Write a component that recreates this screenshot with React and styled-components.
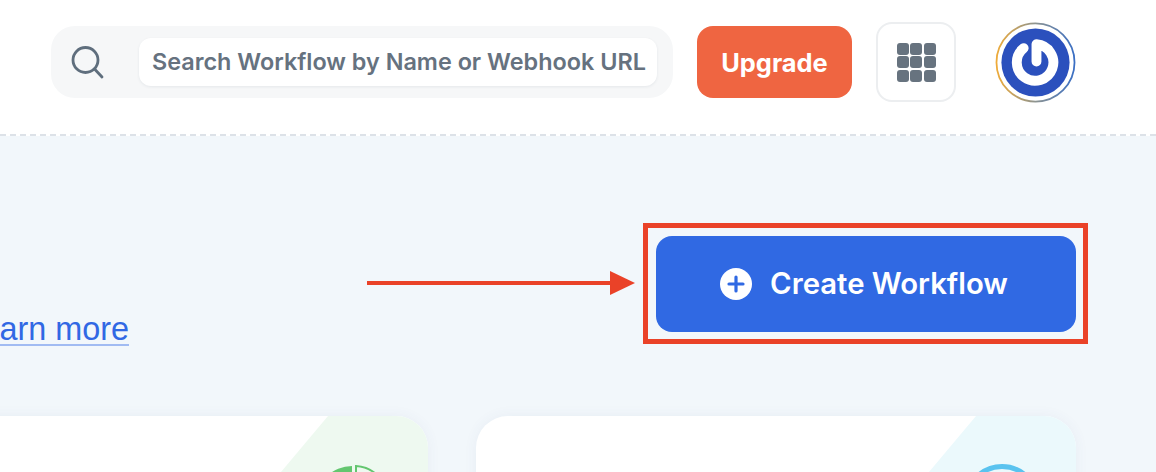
import React from "react";
import styled, { createGlobalStyle } from "styled-components";

const Global = createGlobalStyle`
  html, body { margin: 0; padding: 0; background: #fff; }
  body { font-family: Inter, "Noto Sans", sans-serif; }
`;
const Page = styled.div`
  width: 1156px; height: 472px; overflow: hidden; background: #f2f7fb;
`;
const Header = styled.header`
  height: 134px; box-sizing: border-box; background: #fff;
  display: flex; align-items: flex-start;
  padding: 22px 0 0 51px;
`;
const Dash = styled.div`
  height: 2px; background: repeating-linear-gradient(90deg, #dde2e8 0 6px, transparent 6px 10px), #fff;
`;
const SearchBar = styled.div`
  width: 622px; height: 72px; margin-top: 4px; box-sizing: border-box;
  background: #f6f7f8; border-radius: 24px; display: flex; align-items: center;
  padding: 0 16px 0 18px;
`;
const SearchIcon = styled.svg`
  width: 36px; height: 36px; flex: none; margin-right: 34px;
`;
const SearchField = styled.div`
  flex: 1; height: 48px; background: #fff; border-radius: 12px; display: flex; align-items: center;
  padding: 0 0 2px 13px; box-sizing: border-box; box-shadow: 0 1px 3px rgba(30,50,80,.08);
  font-size: 23.4px; font-weight: 600; color: #66727f; white-space: nowrap;
`;
const Upgrade = styled.button`
  width: 155px; height: 72px; margin: 4px 0 0 24px; border: 0; border-radius: 16px;
  background: #ef6541; color: #fff; font: 700 25.4px Inter, sans-serif; padding: 0;
`;
const Apps = styled.div`
  width: 80px; height: 80px; margin-left: 24px; box-sizing: border-box; border: 2px solid #eceef0;
  border-radius: 16px; background: #fff; display: grid; grid-template: repeat(3, 12px) / repeat(3, 12px);
  gap: 1.5px; place-content: center;
`;
const Dot = styled.span`
  background: #67737f; border-radius: 3px;
`;
const Avatar = styled.svg`
  width: 81px; height: 81px; margin: -0.5px 0 0 39px; flex: none;
`;
const Hero = styled.section`
  height: 96px; margin-top: 100px; display: flex; justify-content: space-between; padding-right: 80px;
`;
const LearnSlot = styled.div`
  width: 129px; display: flex; justify-content: flex-end; align-items: flex-end;
`;
const Learn = styled.a`
  font: 400 32.4px/34px "Liberation Sans", Arial, sans-serif; margin-bottom: -14px; color: #3168e4; white-space: nowrap; flex: none;
  text-decoration: underline; text-decoration-color: #a1bbf2; text-decoration-thickness: 2px; text-underline-offset: 4px;
`;
const CreateWrap = styled.div`
  position: relative; width: 420px; height: 96px;
`;
const Create = styled.button`
  width: 100%; height: 100%; border: 0; border-radius: 16px; background: #3069e3; color: #fff;
  display: flex; align-items: center; justify-content: center; gap: 18px; padding: 0 4px 2px 0;
  font: 600 29.3px Inter, sans-serif;
`;
const PlusIcon = styled.svg`
  width: 32px; height: 32px; flex: none; margin-top: 2px;
`;
const Frame = styled.div`
  position: absolute; inset: -13px -12px -12px -13px; border: 5px solid #ea4228; pointer-events: none;
`;
const Arrow = styled.svg`
  position: absolute; left: -289px; top: 34px; width: 268px; height: 26px;
`;
const Cards = styled.section`
  display: flex; gap: 48px; margin: 84px 0 0 -172px;
`;
const Card = styled.article`
  position: relative; width: 600px; height: 200px; flex: none; background: #fff; border-radius: 32px;
  overflow: hidden; box-shadow: 0 0 14px rgba(60,90,140,.06);
  &::before {
    content: ""; position: absolute; right: 0; top: 0; width: 200px; height: 112px;
    background: ${(p) => p.$tint};
    clip-path: polygon(100px 0, 200px 0, 200px 112px, 6px 112px);
  }
`;
const CardGlyph = styled.svg`
  position: absolute; top: 48px; right: 36px; width: 76px; height: 76px;
`;

export default function App() {
  return (
    <Page>
      <Global />
      <Header>
        <SearchBar>
          <SearchIcon viewBox="0 0 36 36" fill="none" stroke="#5f6e7d" strokeWidth="2.8" strokeLinecap="round">
            <circle cx="16.5" cy="16" r="12.5" />
            <path d="M26 25.5l7 7.5" />
          </SearchIcon>
          <SearchField>Search Workflow by Name or Webhook URL</SearchField>
        </SearchBar>
        <Upgrade>Upgrade</Upgrade>
        <Apps>{Array.from({ length: 9 }, (_, i) => <Dot key={i} />)}</Apps>
        <Avatar viewBox="0 0 82 82" fill="none">
          <defs>
            <linearGradient id="ring" x1="0" y1="0" x2="1" y2="0">
              <stop offset="0" stopColor="#eeab3a" />
              <stop offset=".5" stopColor="#8d9491" />
              <stop offset="1" stopColor="#3b6fc4" />
            </linearGradient>
          </defs>
          <circle cx="41" cy="41" r="39.5" stroke="url(#ring)" strokeWidth="1.8" fill="#fff" />
          <circle cx="41" cy="41" r="34.5" fill="#2b50bd" />
          <path d="M29 26.5A18.5 18.5 0 1 0 42 22.5V40" stroke="#fff" strokeWidth="10" strokeLinecap="round" strokeLinejoin="round" />
        </Avatar>
      </Header>
      <Dash />
      <Hero>
        <LearnSlot><Learn>Learn more</Learn></LearnSlot>
        <CreateWrap>
          <Create>
            <PlusIcon viewBox="0 0 32 32">
              <circle cx="16" cy="16" r="16" fill="#fff" />
              <path d="M16 9v14M9 16h14" stroke="#3069e3" strokeWidth="3.2" strokeLinecap="round" />
            </PlusIcon>
            Create Workflow
          </Create>
          <Frame />
          <Arrow viewBox="0 0 268 26">
            <path d="M0 11h244v4H0z" fill="#ea4228" />
            <path d="M243 1l25 12-25 12z" fill="#ea4228" />
          </Arrow>
        </CreateWrap>
      </Hero>
      <Cards>
        <Card $tint="#eef9f0">
          <CardGlyph viewBox="0 0 76 76">
            <path d="M36 2A36 36 0 1 0 36 74z" fill="#63c66f" />
            <path d="M40 2A34 34 0 0 1 72 36H40z" fill="none" stroke="#63c66f" strokeWidth="2" />
          </CardGlyph>
        </Card>
        <Card $tint="#ebf9fc">
          <CardGlyph viewBox="0 0 76 76">
            <circle cx="38" cy="38" r="35.5" fill="none" stroke="#5ac3ef" strokeWidth="5" />
          </CardGlyph>
        </Card>
      </Cards>
    </Page>
  );
}
